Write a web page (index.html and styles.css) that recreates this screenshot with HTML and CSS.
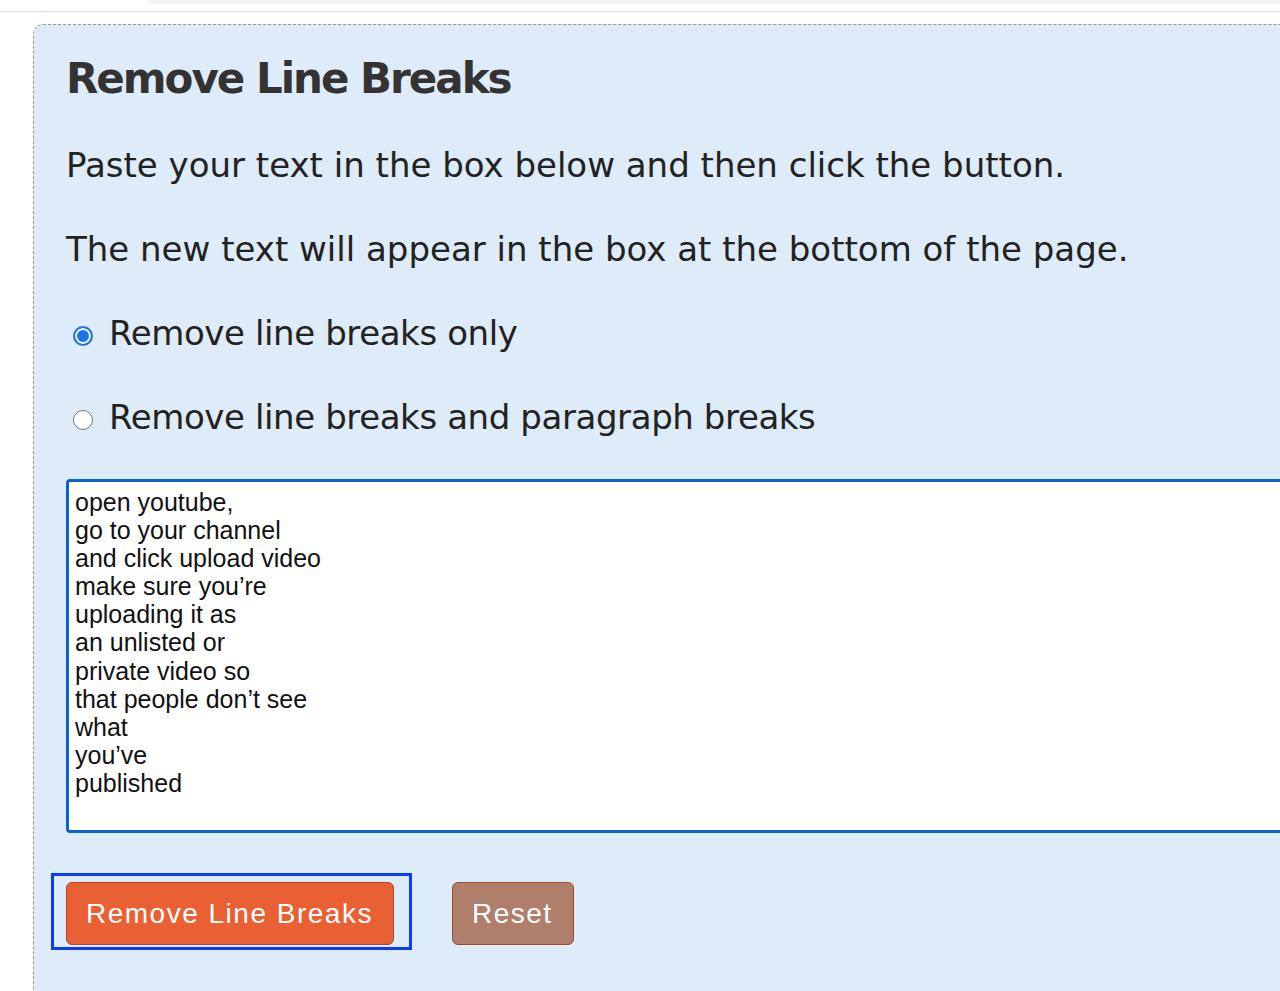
FILE: index.html
```html
<!DOCTYPE html>
<html lang="en">
<head>
    <meta charset="UTF-8">
    <meta name="viewport" content="width=device-width, initial-scale=1.0">
    <title>Remove Line Breaks</title>
    <link rel="stylesheet" href="styles.css">
</head>
<body>
    <div class="topbar">
        <div class="search-pill"></div>
    </div>
    <div class="wrap">
        <h1 class="wrap-title">Remove Line Breaks</h1>
        <p class="intro">Paste your text in the box below and then click the button.</p>
        <p class="intro">The new text will appear in the box at the bottom of the page.</p>
        <form class="tool-form" onsubmit="return false;">
            <label class="option"><input type="radio" name="mode" checked><span>Remove line breaks only</span></label>
            <label class="option"><input type="radio" name="mode"><span>Remove line breaks and paragraph breaks</span></label>
            <textarea class="text-box">open youtube,
go to your channel
and click upload video
make sure you’re
uploading it as
an unlisted or
private video so
that people don’t see
what
you’ve
published</textarea>
            <div class="btn-row">
                <div class="btn-focus">
                    <button class="btn btn-remove">Remove Line Breaks</button>
                </div>
                <button class="btn btn-reset" type="reset">Reset</button>
            </div>
        </form>
    </div>
</body>
</html>
```

FILE: styles.css
```css
* {
    margin: 0;
    padding: 0;
    box-sizing: border-box;
}
body {
    font-family: 'DejaVu Sans', 'Verdana', sans-serif;
    background-color: #fff;
    color: #222;
    width: 1280px;
    height: 991px;
    overflow: hidden;
}
.topbar {
    height: 12px;
    border-bottom: 1px solid #dcdcdc;
    display: flex;
}
.search-pill {
    margin-left: 147px;
    flex: 1;
    height: 4px;
    background-color: #f1f3f4;
    border-bottom-left-radius: 12px;
}
.wrap {
    margin: 12px 0 0 33px;
    width: 1300px;
    min-height: 1000px;
    background-color: #deebf8;
    border: 1px dashed #999;
    border-radius: 10px;
    padding: 24px 0 0 32px;
}
.wrap .wrap-title {
    font-size: 42px;
    font-weight: bold;
    color: #333;
    line-height: 60px;
    letter-spacing: -2px;
}
.intro {
    font-size: 34px;
    line-height: 44px;
    margin-top: 34px;
}
.intro + .intro {
    margin-top: 40px;
}
.tool-form {
    margin-top: 40px;
}
.option {
    display: flex;
    align-items: center;
    font-size: 34px;
    line-height: 44px;
    letter-spacing: -0.4px;
    margin-bottom: 40px;
}
.option input {
    appearance: none;
    width: 20px;
    height: 20px;
    border-radius: 50%;
    border: 1px solid #767676;
    background-color: #fff;
    margin: 6px 16px 0 7px;
}
.option input:checked {
    border: 2px solid #1a73e8;
    background-color: #1a73e8;
    box-shadow: inset 0 0 0 2px #fff;
}
.text-box {
    display: block;
    width: 1300px;
    height: 354px;
    border: 3px solid #0b63d3;
    border-radius: 4px;
    padding: 6px 6px;
    font-family: 'Liberation Sans', Arial, sans-serif;
    font-size: 25px;
    line-height: 28.1px;
    color: #111;
    resize: none;
    outline: none;
}
.btn-row {
    display: flex;
    align-items: flex-start;
    gap: 40px;
    margin: 40px 0 0 -15px;
}
.btn-focus {
    border: 3px solid #0a3cff;
    padding: 6px 15px 2px 12px;
}
.btn {
    height: 63px;
    border-radius: 6px;
    color: #fff;
    font-family: 'Liberation Sans', Arial, sans-serif;
    font-size: 28px;
    letter-spacing: 1.5px;
    padding: 0 20px 0 19px;
    cursor: pointer;
}
.btn-remove {
    background-color: #e86033;
    border: 1px solid #b3452a;
}
.btn-reset {
    background-color: #b07f6c;
    border: 1px solid #a5482e;
    margin-top: 9px;
}
```
